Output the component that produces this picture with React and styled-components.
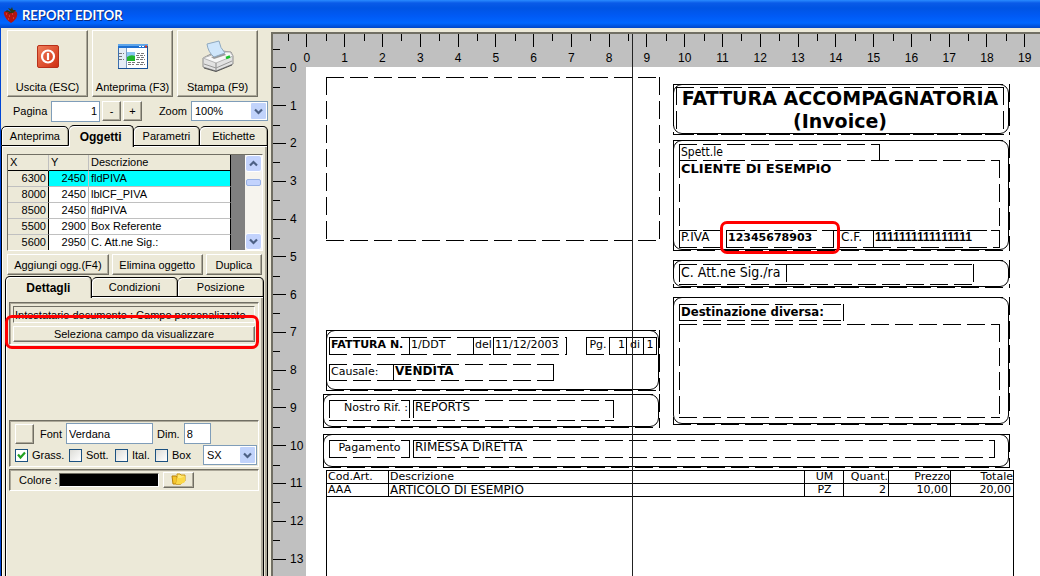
import React from "react";
import styled, { createGlobalStyle, css } from "styled-components";

const Global = createGlobalStyle`
  * { box-sizing: border-box; }
  body { margin: 0; background: #ece9d8; overflow: hidden; }
  body, button, input, select {
    font-family: "Liberation Sans", Arial, sans-serif;
    font-size: 11px;
    color: #000;
  }
`;

const face = "#ece9d8";
const shade = "#aca899";
const dark = "#716f64";

const raised = css`
  border: 1px solid;
  border-color: #fff ${dark} ${dark} #fff;
  box-shadow: inset -1px -1px 0 ${shade};
  background: ${face};
`;

const Window = styled.div`
  display: flex;
  flex-direction: column;
  height: 100vh;
  overflow: hidden;
`;

const TitleBar = styled.header`
  display: flex;
  align-items: center;
  gap: 4px;
  flex: 0 0 28px;
  padding: 2px 3px 0;
  background: linear-gradient(#2a8bff 0, #0a5be8 3px, #0054e3 8px, #005af5 16px, #0066ff 23px, #0046c8 28px);
`;

const Title = styled.h1`
  margin: 0;
  font: bold 13px/18px Lato, "Open Sans", sans-serif;
  color: #fff;
  text-shadow: 1px 1px 0 #0a2a80;
`;

const Body = styled.main`
  display: flex;
  flex: 1;
  min-height: 0;
`;

const Sidebar = styled.aside`
  display: flex;
  flex-direction: column;
  flex: 0 0 268px;
  min-width: 0;
  border-left: 1px solid #0046d5;
`;

const Toolbar = styled.div`
  display: flex;
  gap: 4px;
  padding: 2px 6px 0;
`;

const ToolButton = styled.button`
  ${raised}
  display: flex;
  flex-direction: column;
  align-items: center;
  justify-content: space-between;
  width: 81px;
  height: 67px;
  padding: 9px 0 2px;
  line-height: 14px;
  white-space: nowrap;
`;

const PageRow = styled.div`
  display: flex;
  align-items: center;
  height: 28px;
  padding: 0 0 0 12px;
  gap: 2px;
`;

const FieldLabel = styled.label`
  width: ${(p) => p.$w}px;
  white-space: nowrap;
`;

const TextInput = styled.input`
  width: ${(p) => p.$w}px;
  height: 21px;
  padding: 0 2px;
  border: 1px solid #7f9db9;
  border-radius: 0;
  background: #fff;
  text-align: ${(p) => p.$align || "left"};
`;

const SmallButton = styled.button`
  ${raised}
  width: ${(p) => p.$w || 19}px;
  height: ${(p) => p.$h || 20}px;
  padding: 0;
  line-height: 12px;
`;

const SelectBox = styled.span`
  position: relative;
  display: inline-flex;
  width: ${(p) => p.$w}px;
  height: 20px;
  select {
    appearance: none;
    width: 100%;
    padding: 0 3px;
    border: 1px solid #7f9db9;
    border-radius: 0;
    background: #fff;
  }
  svg {
    position: absolute;
    top: 2px;
    right: 2px;
    pointer-events: none;
  }
`;

const Tabs = styled.div`
  display: flex;
  align-items: flex-end;
  height: ${(p) => p.$h}px;
  position: relative;
`;

const Tab = styled.button`
  flex: ${(p) => p.$w} 1 0;
  height: ${(p) => (p.$active ? 22 : 20)}px;
  margin-bottom: ${(p) => (p.$active ? -1 : 0)}px;
  padding: 0;
  border: 1px solid #000;
  border-bottom: ${(p) => (p.$active ? 0 : 1)}px solid #000;
  border-left-width: ${(p) => (p.$joined ? 0 : 1)}px;
  border-radius: 5px 5px 0 0;
  background: ${face};
  box-shadow: inset 1px 1px 0 #fff, inset -1px 0 0 ${shade};
  font-weight: ${(p) => (p.$active ? "bold" : "normal")};
  font-size: ${(p) => (p.$active ? 12 : 11)}px;
  position: relative;
  z-index: ${(p) => (p.$active ? 1 : 0)};
`;

const Panel = styled.section`
  display: flex;
  flex-direction: column;
  flex: 1;
  min-height: 0;
  border: solid #000;
  border-width: 0 1px;
  box-shadow: inset 1px 1px 0 #fff, inset -2px 0 0 ${shade};
  padding: ${(p) => p.$pad};
`;

const Details = styled.div`
  display: flex;
  flex-direction: column;
  flex: 1;
  min-height: 0;
  margin: 0 1px 0 3px;
`;

const ObjectList = styled.div`
  display: flex;
  height: 97px;
  margin: 0 2px 3px 5px;
  border: 1px solid;
  border-color: ${dark} #fff #fff ${dark};
  background: #808080;
  overflow: hidden;
`;

const ObjectTable = styled.table`
  width: 223px;
  height: 96px;
  table-layout: fixed;
  border-collapse: separate;
  border-spacing: 0;
  background: #fff;
  th, td {
    height: 16px;
    padding: 0 2px;
    border-right: 1px solid #c0c0c0;
    border-bottom: 1px solid #c0c0c0;
    line-height: 15px;
    font-weight: normal;
    text-align: right;
    white-space: nowrap;
  }
  th { text-align: left; background: ${face}; border-bottom-color: #000; }
  th:last-child, td:last-child { border-right-color: #000; }
  td:first-child { background: ${face}; border-right-color: #000; }
  td:last-child { text-align: left; }
`;

const ObjectRow = styled.tr`
  td:not(:first-child) { background: ${(p) => (p.$selected ? "#0ff" : "#fff")}; }
`;

const ScrollBar = styled.div`
  display: flex;
  flex-direction: column;
  align-items: stretch;
  width: 17px;
  margin-left: auto;
  background: #f6f4ee;
`;

const ScrollButton = styled.button`
  height: 17px;
  padding: 0;
  border: 1px solid #fff;
  border-radius: 3px;
  background: #c3d3fd;
  line-height: 0;
`;

const Thumb = styled.div`
  height: 7px;
  margin: 7px 1px auto;
  border: 1px solid #98b1e4;
  border-radius: 2px;
  background: #c3d3fd;
`;

const Actions = styled.div`
  display: flex;
  gap: 3px;
  height: 22px;
  margin: 0 3px 0 5px;
`;

const ActionButton = styled.button`
  ${raised}
  flex: ${(p) => p.$w} 1 0;
  height: 21px;
  padding: 0;
  white-space: nowrap;
`;

const Sunken = styled.div`
  position: relative;
  display: flex;
  flex-direction: column;
  gap: ${(p) => p.$gap || 0}px;
  height: ${(p) => p.$h}px;
  padding: ${(p) => p.$pad};
  border: 1px solid;
  border-color: ${dark} #fff #fff ${dark};
  box-shadow: inset 1px 1px 0 ${shade};
`;

const FieldName = styled.div`
  height: 17px;
  padding-left: 1px;
  border: 1px solid;
  border-color: ${dark} #fff #fff ${dark};
  line-height: 16px;
  white-space: nowrap;
  overflow: hidden;
`;

const PickButton = styled.button`
  ${raised}
  height: 17px;
  padding: 0;
`;

const Spacer = styled.div`
  height: ${(p) => p.$h}px;
`;

const Row = styled.div`
  display: flex;
  align-items: center;
  gap: ${(p) => p.$gap}px;
`;

const ZoomRow = styled(Row)`
  margin-left: auto;
`;

const FontLabel = styled.label`
  padding-left: 2px;
`;

const Check = styled.label`
  display: flex;
  align-items: center;
  gap: 4px;
  width: ${(p) => p.$w}px;
  input {
    appearance: none;
    width: 13px;
    height: 13px;
    margin: 0;
    border: 1px solid #1c5180;
    background: linear-gradient(135deg, #dcdcd7, #fff);
    flex: none;
  }
  input:checked {
    background: #fff;
  }
  svg {
    position: absolute;
    margin: 1px;
    pointer-events: none;
  }
`;

const Swatch = styled.div`
  width: 100px;
  height: 14px;
  border: 1px solid;
  border-color: ${dark} #fff #fff ${dark};
  background: #000;
`;

const Callout = styled.div`
  position: absolute;
  left: ${(p) => p.$x}px;
  top: ${(p) => p.$y}px;
  width: ${(p) => p.$w}px;
  height: ${(p) => p.$h}px;
  border: 3px solid #f00;
  border-radius: 7px;
  pointer-events: none;
  z-index: 3;
`;

/* ---------- report canvas ---------- */

const Canvas = styled.section`
  position: relative;
  display: grid;
  grid-template: 33px minmax(0, 1fr) / 33px minmax(0, 1fr);
  flex: 1;
  min-width: 0;
  margin: 4px 0 0 3px;
  border: solid ${dark};
  border-width: 2px 0 0 2px;
  background: #c0c0c0;
  overflow: hidden;
`;

const TopRuler = styled.div`
  grid-area: 1 / 1 / 2 / 3;
  display: flex;
  padding-left: 15px;
  overflow: hidden;
`;

const SideRuler = styled.div`
  grid-area: 1 / 1 / 3 / 2;
  padding-top: 15px;
  overflow: hidden;
`;

const TopMark = styled.div`
  flex: 0 0 1cm;
  display: flex;
  flex-direction: column;
  align-items: center;
  font-size: 12px;
  line-height: 14px;
  background: linear-gradient(#000, #000) 0 0 / 1px 7px no-repeat;
  &::before {
    content: "";
    width: 1px;
    height: 13px;
    margin-bottom: 4px;
    background: #000;
  }
`;

const SideMark = styled.div`
  height: 1cm;
  display: flex;
  align-items: center;
  font-size: 12px;
  background: linear-gradient(#000, #000) 0 0 / 7px 1px no-repeat;
  &::before {
    content: "";
    width: 13px;
    height: 1px;
    margin-right: 4px;
    background: #000;
  }
`;

const Sheet = styled.div`
  grid-area: 2 / 2 / 3 / 3;
  position: relative;
  background: #fff;
  overflow: hidden;
  font-family: "DejaVu Sans", Verdana, sans-serif;
`;

const hDash = "repeating-linear-gradient(90deg, #000 0 18px, transparent 18px 24px)";
const vDash = "repeating-linear-gradient(#000 0 18px, transparent 18px 24px)";

const Item = styled.div`
  position: absolute;
  left: ${(p) => p.$x}px;
  top: ${(p) => p.$y}px;
  width: ${(p) => p.$w}px;
  height: ${(p) => p.$h}px;
  padding: 0 2px;
  background:
    ${hDash} 0 0 / 100% 1px no-repeat,
    ${hDash} 0 100% / 100% 1px no-repeat,
    ${vDash} 0 0 / 1px 100% no-repeat,
    ${vDash} 100% 0 / 1px 100% no-repeat;
  font-size: ${(p) => p.$size || 12}px;
  font-weight: ${(p) => (p.$bold ? "bold" : "normal")};
  font-family: ${(p) => p.$font || "inherit"};
  line-height: ${(p) => p.$lh || 15}px;
  text-align: ${(p) => p.$align || "left"};
  white-space: nowrap;
`;

const RoundBox = styled(Item)`
  &::after {
    content: "";
    position: absolute;
    inset: 0 1px 1px 0;
    border: 1px solid #000;
    border-radius: 9px;
  }
`;

const Heading = styled(Item)`
  display: flex;
  flex-direction: column;
  align-items: center;
`;

const Lines = styled.div`
  position: absolute;
  left: 20px;
  top: 403px;
  bottom: 0;
  width: 688px;
  border: solid #000;
  border-width: 1px 1px 0;
`;

const LineTable = styled.table`
  width: 100%;
  table-layout: fixed;
  border-collapse: separate;
  border-spacing: 0;
  font-size: 11px;
  th, td {
    height: 13px;
    padding: 0 0 0 1px;
    border-right: 1px solid #000;
    border-bottom: 1px solid #000;
    font-weight: normal;
    line-height: 12px;
    text-align: left;
    white-space: nowrap;
  }
  td:nth-child(2) { font-size: 12px; }
  th:last-child, td:last-child { border-right: 0; }
  th:nth-child(3), td:nth-child(3) { text-align: center; }
  th:nth-child(n + 4), td:nth-child(n + 4) { text-align: right; padding: 0; }
  td:nth-child(n + 4) { padding-right: 2px; }
`;

const Guide = styled.div`
  position: absolute;
  top: 0;
  bottom: 0;
  left: 359px;
  width: 1px;
  background: #222;
`;

const Chevron = ({ up }) => (
  <svg width="9" height="7" viewBox="0 0 9 7">
    <path d={up ? "M1 5.5 4.5 2 8 5.5" : "M1 1.5 4.5 5 8 1.5"} fill="none" stroke="#4d6185" strokeWidth="2.2" />
  </svg>
);

const DropArrow = () => (
  <svg width="15" height="16" viewBox="0 0 15 16">
    <rect width="15" height="16" rx="1" fill="#c1d3fb" />
    <path d="M4 6.5 7.5 10 11 6.5" fill="none" stroke="#4d6185" strokeWidth="2.2" />
  </svg>
);

const Strawberry = () => (
  <svg width="15" height="17" viewBox="0 0 15 17">
    <path d="M1 7Q0 4 4 4l4 1 4-1q3 1 2 5-1 4-6 7Q2 12 1 7Z" fill="#b3140f" />
    <path d="M3 7h1M6 9h1M9 7h1M5 12h1M10 11h1" stroke="#e8654b" />
    <path d="M8 5 5 1l3 1 1-2 1 3 3 0-3 3-2 0-3 1 1-2-4 0 2-2Z" fill="#2d3a12" />
  </svg>
);

const PowerIcon = () => (
  <svg width="24" height="32" viewBox="0 0 24 32">
    <defs>
      <linearGradient id="pw" x1="0" y1="0" x2="1" y2="1">
        <stop offset="0" stopColor="#f0805c" />
        <stop offset="1" stopColor="#cf2d10" />
      </linearGradient>
    </defs>
    <rect x="1.5" y="5.5" width="21" height="22" rx="1.5" fill="url(#pw)" stroke="#b8301a" />
    <circle cx="12" cy="16.5" r="6" fill="none" stroke="#fff" strokeWidth="2.2" />
    <path d="M12 13v7" stroke="#fff" strokeWidth="2.2" />
  </svg>
);

const PreviewIcon = () => (
  <svg width="30" height="32" viewBox="0 0 30 32">
    <rect x=".5" y="4.5" width="29" height="24" fill="#fff" stroke="#3c6fae" />
    <rect x="0" y="4" width="30" height="4" fill="#1d6fd0" />
    <rect x="0" y="4" width="30" height="2" fill="#5ea5ea" />
    <path d="M21 6.5h2M24 6.5h2" stroke="#fff" />
    <path d="M27 6.5h2" stroke="#e23b20" strokeWidth="2" />
    <rect x="1" y="8" width="7" height="20" fill="#e4ecf5" />
    <path d="M1 13.5h5M1 16.5h4M1 19.5h5M10 22.5h7M10 24.5h6M19 13.5h8M18 15.5h9M19 17.5h8M18 19.5h9M19 22.5h8M18 24.5h9" stroke="#777" strokeDasharray="3 1" />
    <path d="M8.5 8v20" stroke="#7d9cc0" />
    <rect x="9" y="12" width="8" height="5" fill="#8cc6f0" />
    <path d="M9 17q4-3 8-1v5H9Z" fill="#23b52c" />
    <path d="M29.5 6v22.5H0" fill="none" stroke="#174f96" />
  </svg>
);

const PrinterIcon = () => (
  <svg width="32" height="32" viewBox="0 0 32 32">
    <path d="M1 18 9 14h3l8-3 9 1 2 4v8L14 31 1 27Z" fill="#e2e2e2" stroke="#8d8d8d" />
    <path d="m1 18 13 5 17-7-3-4-7 0-11 3Z" fill="#f7f7f7" stroke="#b5b5b5" />
    <path d="M9 17 22 13l2 2-12 4Z" fill="#9a9a9a" />
    <path d="M5 4 17 1q1 7 6 12l-11 4Q6 12 5 4Z" fill="#cfe6fb" stroke="#8fa9c0" />
    <path d="M14 23v8" fill="none" stroke="#888" />
    <path d="m2 24 12 4 16-7" fill="none" stroke="#999" />
    <path d="m24 18 4-1.500" stroke="#19c22b" strokeWidth="2.5" />
    <path d="m2 28 12 3.500L30 25" fill="none" stroke="#555" />
  </svg>
);

const FoldersIcon = () => (
  <svg width="16" height="12" viewBox="0 0 16 12">
    <path d="M1 3h4l1 1h4v7H2Z" fill="#f5c52c" stroke="#b98208" />
    <path d="M6 1h3l1 1h4v6l-5 3H5l1-5Z" fill="#ffe873" stroke="#c99512" />
    <path d="M5 11 6 5h4l4-2v6l-4 2Z" fill="#fbd848" />
  </svg>
);

const OBJECTS = [
  [6300, 2450, "fldPIVA"],
  [8000, 2450, "lblCF_PIVA"],
  [8500, 2450, "fldPIVA"],
  [5500, 2900, "Box Referente"],
  [5600, 2950, "C. Att.ne Sig.:"],
];

const BOXES = [
  [367, 17, 337, 51],
  [367, 73, 337, 111],
  [367, 193, 337, 28],
  [367, 230, 337, 128],
  [20, 263, 334, 61],
  [17, 327, 337, 34],
  [17, 367, 687, 34],
];

const tahoma = '"DejaVu Sans Condensed", Tahoma, sans-serif';

const FIELDS = [
  { x: 20, y: 10, w: 334, h: 164 },
  { x: 373, y: 77, w: 201, h: 17, text: "Spett.le", font: tahoma, size: 12, lh: 16 },
  { x: 373, y: 93, w: 321, h: 71, text: "CLIENTE DI ESEMPIO", bold: true, size: 13, lh: 17 },
  { x: 373, y: 163, w: 48, h: 18, text: "P.IVA" },
  { x: 420, y: 163, w: 108, h: 18, text: "12345678903", bold: true, size: 11 },
  { x: 533, y: 163, w: 35, h: 18, text: "C.F.", size: 12 },
  { x: 567, y: 163, w: 127, h: 18, text: "1111111111111111", bold: true, font: '"Liberation Sans", Arial, sans-serif' },
  { x: 373, y: 197, w: 108, h: 21, text: "C. Att.ne Sig./ra", font: tahoma, size: 14, lh: 16 },
  { x: 480, y: 197, w: 188, h: 21 },
  { x: 373, y: 237, w: 165, h: 17, text: "Destinazione diversa:", bold: true, font: tahoma, size: 13, lh: 16 },
  { x: 373, y: 257, w: 321, h: 94 },
  { x: 23, y: 270, w: 81, h: 18, text: "FATTURA N.", bold: true, size: 11 },
  { x: 103, y: 270, w: 65, h: 18, text: "1/DDT", size: 11 },
  { x: 167, y: 270, w: 21, h: 18, text: "del", size: 11 },
  { x: 187, y: 270, w: 74, h: 18, text: "11/12/2003", size: 11 },
  { x: 280, y: 270, w: 24, h: 18, text: "Pg.", align: "center", size: 11 },
  { x: 303, y: 270, w: 18, h: 18, text: "1", align: "right", size: 11 },
  { x: 320, y: 270, w: 18, h: 18, text: "di", align: "center", size: 11 },
  { x: 337, y: 270, w: 14, h: 18, text: "1", align: "center", size: 11 },
  { x: 23, y: 297, w: 65, h: 17, text: "Causale:", size: 11 },
  { x: 87, y: 297, w: 161, h: 17, text: "VENDITA", bold: true, size: 12 },
  { x: 23, y: 333, w: 81, h: 21, text: "Nostro Rif. :", align: "right", size: 11 },
  { x: 107, y: 333, w: 201, h: 21, text: "REPORTS" },
  { x: 23, y: 373, w: 81, h: 18, text: "Pagamento", align: "center", size: 11 },
  { x: 107, y: 373, w: 582, h: 18, text: "RIMESSA DIRETTA" },
];

const marks = (n) => Array.from({ length: n }, (_, i) => i);

export default function App() {
  return (
    <Window>
      <Global />
      <TitleBar>
        <Strawberry />
        <Title>REPORT EDITOR</Title>
      </TitleBar>
      <Body>
        <Sidebar>
          <Toolbar>
            <ToolButton><PowerIcon />Uscita (ESC)</ToolButton>
            <ToolButton><PreviewIcon />Anteprima (F3)</ToolButton>
            <ToolButton><PrinterIcon />Stampa (F9)</ToolButton>
          </Toolbar>
          <PageRow>
            <FieldLabel $w={36} htmlFor="page">Pagina</FieldLabel>
            <TextInput id="page" $w={49} $align="right" defaultValue="1" />
            <SmallButton>-</SmallButton>
            <SmallButton>+</SmallButton>
            <ZoomRow $gap={4}>
              <label htmlFor="zoom">Zoom</label>
              <SelectBox $w={77}>
                <select id="zoom" defaultValue="100%"><option>100%</option></select>
                <DropArrow />
              </SelectBox>
            </ZoomRow>
          </PageRow>
          <Tabs $h={21} role="tablist">
            <Tab role="tab" $w={67}>Anteprima</Tab>
            <Tab role="tab" $w={65} $active $joined>Oggetti</Tab>
            <Tab role="tab" $w={67} $joined>Parametri</Tab>
            <Tab role="tab" $w={68} $joined>Etichette</Tab>
          </Tabs>
          <Panel $pad="8px 2px 0 0">
            <ObjectList>
              <ObjectTable>
                <colgroup><col width="41" /><col width="40" /><col /></colgroup>
                <thead><tr><th>X</th><th>Y</th><th>Descrizione</th></tr></thead>
                <tbody>
                  {OBJECTS.map(([x, y, name], i) => (
                    <ObjectRow key={i} $selected={i === 0}>
                      <td>{x}</td><td>{y}</td><td>{name}</td>
                    </ObjectRow>
                  ))}
                </tbody>
              </ObjectTable>
              <ScrollBar>
                <ScrollButton aria-label="Su"><Chevron up /></ScrollButton>
                <Thumb />
                <ScrollButton aria-label="Giù"><Chevron /></ScrollButton>
              </ScrollBar>
            </ObjectList>
            <Actions>
              <ActionButton $w={103}>Aggiungi ogg.(F4)</ActionButton>
              <ActionButton $w={92}>Elimina oggetto</ActionButton>
              <ActionButton $w={56}>Duplica</ActionButton>
            </Actions>
            <Details>
              <Tabs $h={21} role="tablist">
                <Tab role="tab" $w={86} $active>Dettagli</Tab>
                <Tab role="tab" $w={87} $joined>Condizioni</Tab>
                <Tab role="tab" $w={86} $joined>Posizione</Tab>
              </Tabs>
              <Panel $pad="5px 4px 0 3px">
                <Sunken $h={43} $gap={3} $pad="3px 3px 2px">
                  <FieldName>Intestatario documento : Campo personalizzato</FieldName>
                  <PickButton>Seleziona campo da visualizzare</PickButton>
                  <Callout $x={-5} $y={12} $w={254} $h={34} />
                </Sunken>
                <Spacer $h={75} />
                <Sunken $h={47} $gap={1} $pad="2px 0 0 5px">
                  <Row $gap={4}>
                    <SmallButton aria-label="Scegli font" />
                    <FontLabel htmlFor="font">Font</FontLabel>
                    <TextInput id="font" $w={87} defaultValue="Verdana" />
                    <label htmlFor="dim">Dim.</label>
                    <TextInput id="dim" $w={27} defaultValue="8" />
                  </Row>
                  <Row $gap={0}>
                    <Check $w={54}>
                      <input type="checkbox" defaultChecked />
                      <svg width="11" height="11" viewBox="0 0 11 11">
                        <path d="M2 4.5 4.5 7.5 9 2.5" fill="none" stroke="#21a121" strokeWidth="2.2" />
                      </svg>
                      Grass.
                    </Check>
                    <Check $w={46}><input type="checkbox" />Sott.</Check>
                    <Check $w={40}><input type="checkbox" />Ital.</Check>
                    <Check $w={48}><input type="checkbox" />Box</Check>
                    <SelectBox $w={54}>
                      <select aria-label="Allineamento" defaultValue="SX"><option>SX</option></select>
                      <DropArrow />
                    </SelectBox>
                  </Row>
                </Sunken>
                <Spacer $h={2} />
                <Sunken $h={22} $pad="2px 0 0 9px">
                  <Row $gap={4}>
                    <FieldLabel as="span" $w={36}>Colore :</FieldLabel>
                    <Swatch />
                    <SmallButton $w={31} $h={16} aria-label="Scegli colore"><FoldersIcon /></SmallButton>
                  </Row>
                </Sunken>
              </Panel>
            </Details>
          </Panel>
        </Sidebar>

        <Canvas>
          <TopRuler>{marks(20).map((n) => <TopMark key={n}>{n}</TopMark>)}</TopRuler>
          <SideRuler>{marks(14).map((n) => <SideMark key={n}>{n}</SideMark>)}</SideRuler>
          <Sheet>
            {BOXES.map(([x, y, w, h], i) => <RoundBox key={i} $x={x} $y={y} $w={w} $h={h} />)}
            <Heading $x={370} $y={20} $w={328} $h={48} $bold $size={19} $lh={23}>
              <span>FATTURA ACCOMPAGNATORIA</span>
              <span>(Invoice)</span>
            </Heading>
            {FIELDS.map((f, i) => (
              <Item key={i} $x={f.x} $y={f.y} $w={f.w} $h={f.h} $bold={f.bold} $size={f.size} $lh={f.lh} $font={f.font} $align={f.align}>
                {f.text}
              </Item>
            ))}
            <Lines>
              <LineTable>
                <colgroup>
                  <col width="62" /><col width="416" /><col width="39" /><col width="45" /><col width="62" /><col />
                </colgroup>
                <thead>
                  <tr><th>Cod.Art.</th><th>Descrizione</th><th>UM</th><th>Quant.</th><th>Prezzo</th><th>Totale</th></tr>
                </thead>
                <tbody>
                  <tr><td>AAA</td><td>ARTICOLO DI ESEMPIO</td><td>PZ</td><td>2</td><td>10,00</td><td>20,00</td></tr>
                </tbody>
              </LineTable>
            </Lines>
            <Callout $x={414} $y={154} $w={120} $h={33} />
          </Sheet>
          <Guide />
        </Canvas>
      </Body>
    </Window>
  );
}
